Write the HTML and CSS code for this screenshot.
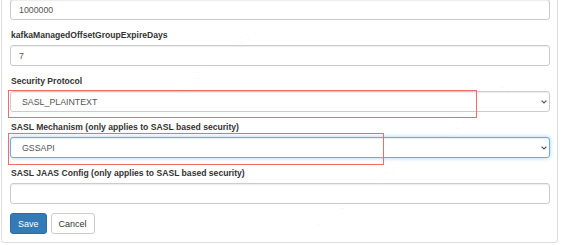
FILE: index.html
```html
<!DOCTYPE html>
<html lang="en">
<head>
  <meta charset="UTF-8" />
  <meta name="viewport" content="width=device-width, initial-scale=1.0" />
  <title>Cluster Config</title>
  <link rel="stylesheet" href="styles.css">
</head>
<body>

  <!-- Config Panel -->
  <div class="panel">
    <!-- watermark -->
    <span class="wm" style="left:160px; top:100px;">op_xiewg C4:65:16:22:C5:21</span>
    <span class="wm" style="left:305px; top:230px;">op_xiewg C4:65:16:22:C5:21</span>
    <span class="wm" style="left:420px; top:150px;">op_xiewg C4:65:16:22:C5:21</span>

    <form class="config-form">
      <div class="form-group first">
        <input type="text" class="form-control" value="1000000" />
      </div>

      <div class="form-group">
        <label>kafkaManagedOffsetGroupExpireDays</label>
        <input type="text" class="form-control" value="7" />
      </div>

      <div class="form-group">
        <label>Security Protocol</label>
        <div class="select-wrap">
          <select class="form-control">
            <option>SASL_PLAINTEXT</option>
          </select>
          <svg class="chevron" width="6" height="4" viewBox="0 0 6 4"><path d="M0.6 0.6 L3 3 L5.4 0.6" fill="none" stroke="#555" stroke-width="1.2"/></svg>
        </div>
      </div>

      <div class="form-group">
        <label>SASL Mechanism (only applies to SASL based security)</label>
        <div class="select-wrap">
          <select class="form-control focused">
            <option>GSSAPI</option>
          </select>
          <svg class="chevron" width="6" height="4" viewBox="0 0 6 4"><path d="M0.6 0.6 L3 3 L5.4 0.6" fill="none" stroke="#555" stroke-width="1.2"/></svg>
        </div>
      </div>

      <div class="form-group">
        <label>SASL JAAS Config (only applies to SASL based security)</label>
        <input type="text" class="form-control" value="" />
      </div>

      <div class="actions">
        <button type="submit" class="btn btn-primary">Save</button>
        <button type="button" class="btn btn-default">Cancel</button>
      </div>
    </form>

    <!-- annotation boxes -->
    <div class="mark mark-protocol"></div>
    <div class="mark mark-mechanism"></div>
  </div>

</body>
</html>
```

FILE: styles.css
```css
/* Reset & Base */
* {
  margin: 0;
  padding: 0;
  box-sizing: border-box;
}
html, body {
  background: #fff;
  font-family: 'Liberation Sans', Arial, sans-serif;
  font-size: 9px;
  color: #333;
  overflow: hidden;
}

/* Panel */
.panel {
  position: relative;
  width: 557px;
  margin-left: 1px;
  padding: 0 7px 8px 8px;
  border: 1px solid #ddd;
  border-top: none;
  border-radius: 0 0 3px 3px;
}

/* Form */
.config-form {
  position: relative;
}
.form-group {
  margin-bottom: 9px;
}
.form-group.first {
  margin-top: -1px;
}
.form-group label {
  display: block;
  font-size: 8.6px;
  font-weight: bold;
  line-height: 12px;
  margin-bottom: 4px;
  padding-left: 1px;
  color: #333;
}
.form-control {
  display: block;
  width: 100%;
  height: 21px;
  padding: 0 8px;
  font-family: inherit;
  font-size: 8.8px;
  color: #555;
  background: #fff;
  border: 1px solid #ccc;
  border-radius: 3px;
  box-shadow: inset 0 1px 1px rgba(0, 0, 0, 0.075);
  outline: none;
}
select.form-control {
  appearance: none;
  -webkit-appearance: none;
  padding-left: 11px;
}
select.form-control.focused {
  border-color: #66afe9;
  box-shadow: inset 0 1px 1px rgba(0, 0, 0, 0.075), 0 0 4px rgba(102, 175, 233, 0.6);
}
.select-wrap {
  position: relative;
}
.chevron {
  position: absolute;
  right: 3px;
  top: 9px;
}

/* Buttons */
.actions {
  display: flex;
  gap: 4px;
}
.btn {
  height: 21px;
  padding: 0 7px;
  font-family: inherit;
  font-size: 9px;
  border: 1px solid #ccc;
  border-radius: 3px;
  cursor: pointer;
}
.btn-primary {
  color: #fff;
  background: #337ab7;
  border-color: #2e6da4;
}
.btn-default {
  color: #333;
  background: #fff;
}

/* Annotation boxes */
.mark {
  position: absolute;
  z-index: 5;
  border: 1px solid #f06b6b;
  pointer-events: none;
}
.mark-protocol {
  left: 6px;
  top: 91px;
  width: 469px;
  height: 28px;
}
.mark-mechanism {
  left: 6px;
  top: 134px;
  width: 376px;
  height: 32px;
}

/* Watermark */
.wm {
  position: absolute;
  font-size: 10px;
  color: rgba(0, 0, 0, 0.035);
  white-space: nowrap;
  transform: rotate(-38deg);
  transform-origin: left bottom;
  pointer-events: none;
}
```
